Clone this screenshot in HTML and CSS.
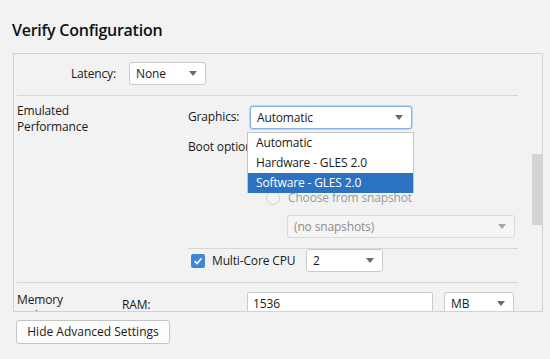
FILE: index.html
```html
<!DOCTYPE html>
<html lang="en">
<head>
  <meta charset="UTF-8">
  <meta name="viewport" content="width=device-width, initial-scale=1.0">
  <title>Verify Configuration</title>
  <link rel="stylesheet" href="styles.css">
</head>
<body>
  <h1 class="title">Verify Configuration</h1>

  <div class="panel">
    <div class="row latency-row">
      <span class="latency-label">Latency:</span>
      <div class="select w-latency"><span>None</span><i class="caret"></i></div>
    </div>
    <div class="sep"></div>

    <div class="section perf">
      <div class="section-label">Emulated<br>Performance</div>
      <div class="fields">
        <div class="field">
          <span class="field-label w-graphics-label">Graphics:</span>
          <div class="select focused w-graphics"><span>Automatic</span><i class="caret"></i></div>
        </div>
        <div class="field boot">
          <span class="field-label w-boot-label">Boot option:</span>
          <div class="radios">
            <label class="radio"><i class="dot on"></i>Quick boot</label>
            <label class="radio"><i class="dot"></i>Cold boot</label>
            <label class="radio disabled"><i class="dot"></i>Choose from snapshot</label>
            <div class="select disabled w-snapshot"><span>(no snapshots)</span><i class="caret"></i></div>
          </div>
        </div>
        <div class="sep short"></div>
        <div class="field cpu">
          <label class="check">
            <i class="box"><svg width="10" height="10" viewBox="0 0 10 10"><path d="M1.5 5.2 L4 7.6 L8.6 2.2" fill="none" stroke="#fff" stroke-width="1.6"/></svg></i>
            Multi-Core CPU
          </label>
          <div class="select w-cores"><span>2</span><i class="caret"></i></div>
        </div>
      </div>
    </div>
    <div class="sep"></div>

    <div class="section memory">
      <div class="section-label w-memory-label">Memory<br>and Storage</div>
      <span class="field-label w-ram-label">RAM:</span>
      <div class="input w-ram">1536</div>
      <div class="select w-unit"><span>MB</span><i class="caret"></i></div>
    </div>

    <div class="scroll-thumb"></div>

    <ul class="popup">
      <li>Automatic</li>
      <li>Hardware - GLES 2.0</li>
      <li class="selected">Software - GLES 2.0</li>
    </ul>
  </div>

  <button class="btn">Hide Advanced Settings</button>
</body>
</html>
```

FILE: styles.css
```css
body {
  margin: 0;
  background: #f2f2f2;
  color: #1a1a1a;
  font-family: "Open Sans", "Noto Sans", sans-serif;
  font-size: 12px;
  line-height: 16px;
  letter-spacing: -0.15px;
}
.title {
  margin: 0;
  padding: 19px 12px 0;
  height: 34px;
  font-size: 16px;
  line-height: 22px;
  font-weight: 600;
  letter-spacing: -0.25px;
  color: #111;
}
.panel {
  position: relative;
  box-sizing: border-box;
  margin-left: 13px;
  width: 530px;
  height: 259px;
  border: 1px solid #d2d2d2;
  overflow: hidden;
}
.row {
  display: flex;
  align-items: center;
}
.latency-row {
  padding-top: 8px;
  height: 33px;
  align-items: flex-start;
}
.latency-label {
  width: 102px;
  margin-right: 13px;
  text-align: right;
  line-height: 23px;
}
.sep {
  margin-left: 3px;
  width: 501px;
  height: 1px;
  background: #d6d6d6;
}
.sep.short {
  margin: 10px 0 0;
  width: 330px;
}
.section {
  display: flex;
  padding: 9px 0 0 3px;
}
.perf {
  padding-bottom: 10px;
}
.section-label {
  width: 171px;
  margin-top: -2px;
}
.fields {
  display: flex;
  flex-direction: column;
}
.field {
  display: flex;
  align-items: flex-start;
}
.field-label {
  line-height: 23px;
}
.w-graphics-label { width: 62px; }
.w-boot-label { width: 78px; line-height: 20px; }
.boot { margin-top: 8px; }
.radios {
  display: flex;
  flex-direction: column;
  gap: 5px;
}
.radio {
  display: flex;
  align-items: center;
  gap: 8px;
  height: 20px;
}
.radio.disabled {
  margin-top: 1px;
  color: #9a9a9a;
}
.dot {
  box-sizing: border-box;
  width: 14px;
  height: 14px;
  border: 1px solid #bdbdbd;
  border-radius: 50%;
  background: #fff;
}
.radio.disabled .dot {
  border-color: #d2d2d2;
  background: #f4f4f4;
}
.select {
  box-sizing: border-box;
  display: flex;
  align-items: center;
  justify-content: space-between;
  height: 23px;
  padding: 0 8px 0 6px;
  background: #fff;
  border: 1px solid #cacaca;
  border-radius: 3px;
}
.select.focused {
  margin-top: 1px;
  border-color: #84b2e8;
  box-shadow: 0 0 0 1px #bcd6f3;
}
.select.disabled {
  background: #f5f5f5;
  border-color: #d9d9d9;
  color: #8c8c8c;
  margin: 2px 0 0 21px;
}
.select.disabled .caret { border-top-color: #a6a6a6; }
.caret {
  width: 0;
  height: 0;
  border-left: 4px solid transparent;
  border-right: 4px solid transparent;
  border-top: 5px solid #6b6b6b;
}
.w-latency { width: 77px; }
.w-graphics { width: 162px; }
.w-snapshot { width: 228px; }
.w-cores { width: 77px; }
.w-unit { width: 70px; }
.cpu { align-items: center; }
.check {
  display: flex;
  align-items: center;
  gap: 7px;
  width: 115px;
  padding-left: 3px;
}
.box {
  box-sizing: border-box;
  display: flex;
  align-items: center;
  justify-content: center;
  width: 14px;
  height: 14px;
  border-radius: 2px;
  background: #3d85d6;
}
.memory {
  align-items: flex-start;
}
.w-memory-label { width: 105px; margin-top: 0; }
.w-ram-label { width: 125px; line-height: 26px; }
.input {
  box-sizing: border-box;
  width: 186px;
  height: 23px;
  margin-right: 11px;
  padding-left: 5px;
  line-height: 21px;
  background: #fff;
  border: 1px solid #cacaca;
  border-radius: 2px;
}
.scroll-thumb {
  position: absolute;
  right: 0;
  top: 100px;
  width: 10px;
  height: 71px;
  background: #d4d4d4;
}
.popup {
  position: absolute;
  left: 233px;
  top: 78px;
  box-sizing: border-box;
  width: 167px;
  margin: 0;
  padding: 0;
  list-style: none;
  background: #fff;
  border: 1px solid #c6c6c6;
  border-bottom: 0;
}
.popup li {
  height: 20px;
  padding-left: 8px;
  line-height: 20px;
}
.popup li.selected {
  background: #2b72c1;
  color: #fff;
}
.btn {
  display: block;
  box-sizing: border-box;
  margin: 8px 0 0 16px;
  width: 154px;
  height: 24px;
  padding: 0;
  font: inherit;
  color: #1a1a1a;
  background: #fdfdfd;
  border: 1px solid #c4c4c4;
  border-radius: 3px;
}
```
